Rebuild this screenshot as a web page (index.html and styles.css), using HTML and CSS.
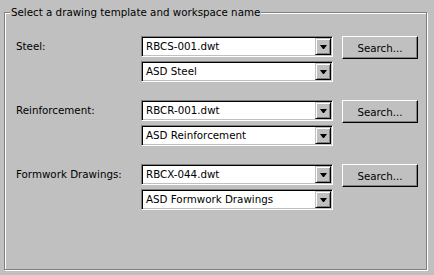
FILE: index.html
```html
<!DOCTYPE html>
<html lang="en">
<head>
  <meta charset="UTF-8" />
  <title>Drawing Template</title>
  <link rel="stylesheet" href="styles.css">
</head>
<body>

<div class="page">
  <fieldset class="group">
    <legend>Select a drawing template and workspace name</legend>
    <div class="rows">

      <div class="row">
        <div class="label">Steel:</div>
        <div class="combos">
          <div class="combo"><span class="value">RBCS-001.dwt</span><span class="arrow"></span></div>
          <div class="combo"><span class="value">ASD Steel</span><span class="arrow"></span></div>
        </div>
        <button type="button" class="btn">Search...</button>
      </div>

      <div class="row">
        <div class="label">Reinforcement:</div>
        <div class="combos">
          <div class="combo"><span class="value">RBCR-001.dwt</span><span class="arrow"></span></div>
          <div class="combo"><span class="value">ASD Reinforcement</span><span class="arrow"></span></div>
        </div>
        <button type="button" class="btn">Search...</button>
      </div>

      <div class="row">
        <div class="label">Formwork Drawings:</div>
        <div class="combos">
          <div class="combo"><span class="value">RBCX-044.dwt</span><span class="arrow"></span></div>
          <div class="combo"><span class="value">ASD Formwork Drawings</span><span class="arrow"></span></div>
        </div>
        <button type="button" class="btn">Search...</button>
      </div>

    </div>
  </fieldset>
</div>

</body>
</html>
```

FILE: styles.css
```css
html, body {
  margin: 0;
  padding: 0;
  height: 100%;
  background: #c0c0c0;
  font-family: "DejaVu Sans", sans-serif;
  font-size: 10.3px;
  color: #000;
}
.page {
  padding: 5px 0 0 4px;
}
.group {
  box-sizing: border-box;
  width: 423px;
  height: 265px;
  margin: 0;
  padding: 0;
  border: 1px solid #808080;
  box-shadow: inset 1px 1px 0 #fff, 1px 1px 0 #fff;
}
.group legend {
  margin-left: 5px;
  padding: 0 1px;
  line-height: 14px;
  background: #c0c0c0;
}
.rows {
  display: flex;
  flex-direction: column;
  gap: 18px;
  padding: 17px 0 0 11px;
}
.row {
  display: flex;
  align-items: flex-start;
}
.label {
  width: 125px;
  line-height: 20px;
}
.combos {
  display: flex;
  flex-direction: column;
  gap: 4px;
  width: 192px;
}
.combo {
  box-sizing: border-box;
  display: flex;
  height: 21px;
  padding: 1px;
  border: 1px solid;
  border-color: #808080 #fff #fff #808080;
  box-shadow: inset 1px 1px 0 #000, inset -1px -1px 0 #c0c0c0;
}
.value {
  flex: 1;
  background: #fff;
  padding-left: 3px;
  line-height: 17px;
}
.arrow {
  box-sizing: border-box;
  display: flex;
  align-items: center;
  justify-content: center;
  width: 16px;
  background: #c0c0c0;
  border: 1px solid;
  border-color: #c0c0c0 #000 #000 #c0c0c0;
  box-shadow: inset 1px 1px 0 #fff, inset -1px -1px 0 #808080;
}
.arrow::after {
  content: "";
  width: 1px;
  height: 0;
  border-left: 3px solid transparent;
  border-right: 3px solid transparent;
  border-top: 4px solid #000;
}
.btn {
  box-sizing: border-box;
  width: 76px;
  height: 23px;
  margin-left: 9px;
  padding: 0;
  font: inherit;
  color: #000;
  background: #c0c0c0;
  border: 1px solid;
  border-color: #fff #000 #000 #fff;
  box-shadow: inset -1px -1px 0 #808080;
}
```
